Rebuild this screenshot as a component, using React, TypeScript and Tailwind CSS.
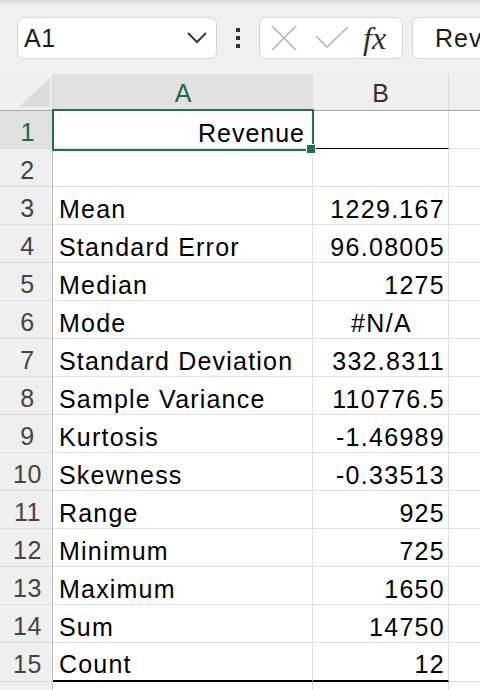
import React from "react";

type Row = { n: number; label?: string; value?: string; center?: boolean };

const rows: Row[] = [
  { n: 2 },
  { n: 3, label: "Mean", value: "1229.167" },
  { n: 4, label: "Standard Error", value: "96.08005" },
  { n: 5, label: "Median", value: "1275" },
  { n: 6, label: "Mode", value: "#N/A", center: true },
  { n: 7, label: "Standard Deviation", value: "332.8311" },
  { n: 8, label: "Sample Variance", value: "110776.5" },
  { n: 9, label: "Kurtosis", value: "-1.46989" },
  { n: 10, label: "Skewness", value: "-0.33513" },
  { n: 11, label: "Range", value: "925" },
  { n: 12, label: "Minimum", value: "725" },
  { n: 13, label: "Maximum", value: "1650" },
  { n: 14, label: "Sum", value: "14750" },
  { n: 15, label: "Count", value: "12" },
];

function Toolbar() {
  return (
    <div className="shrink-0">
      <div className="h-[6px] bg-gradient-to-b from-[#d9d9d9] to-[#f0f0f0]" />
      <div className="flex items-start h-[68px] pt-[11px]">
        {/* Name box */}
        <div className="ml-[17px] w-[200px] h-[42px] shrink-0 rounded-[7px] border border-[#d6d6d6] bg-white flex items-center justify-between pl-[6px] pr-[9px]">
          <span className="text-[25px] leading-none text-[#1b1b1b] tracking-[0.5px]">A1</span>
          <svg width="20" height="12" viewBox="0 0 20 12">
            <polyline points="1,1 10,10 19,1" fill="none" stroke="#3a3a3a" strokeWidth="2" />
          </svg>
        </div>

        {/* more dots */}
        <div className="w-[42px] h-[42px] shrink-0 flex flex-col items-center justify-center gap-[4px]">
          <span className="w-[4px] h-[4px] bg-[#333]" />
          <span className="w-[4px] h-[4px] bg-[#333]" />
          <span className="w-[4px] h-[4px] bg-[#333]" />
        </div>

        {/* cancel / enter / fx */}
        <div className="w-[144px] h-[42px] shrink-0 rounded-[7px] border border-[#d6d6d6] bg-white flex items-center pl-[11px]">
          <svg width="26" height="26" viewBox="0 0 26 26">
            <line x1="1" y1="1" x2="25" y2="25" stroke="#b4b4b4" strokeWidth="1.6" />
            <line x1="25" y1="1" x2="1" y2="25" stroke="#b4b4b4" strokeWidth="1.6" />
          </svg>
          <svg className="ml-[18px]" width="34" height="24" viewBox="0 0 34 24">
            <polyline points="1,10 12,21 33,1" fill="none" stroke="#b4b4b4" strokeWidth="1.6" />
          </svg>
          <span className="ml-[14px] text-[32px] leading-none italic text-[#2e2e2e] font-['Liberation_Serif',serif]">
            fx
          </span>
        </div>

        {/* formula bar */}
        <div className="ml-[9px] w-[120px] h-[42px] shrink-0 overflow-hidden rounded-[7px] border border-[#d6d6d6] bg-white flex items-center pl-[22px]">
          <span className="text-[25px] leading-none text-[#1b1b1b] tracking-[1px] whitespace-nowrap">Revenue</span>
        </div>
      </div>
    </div>
  );
}

function HeaderRow() {
  return (
    <div className="flex h-[37px] shrink-0 border-b border-[#a6a6a6]">
      <div className="w-[53px] shrink-0 bg-[#efefef] border-r border-[#d4d4d4] flex items-end justify-end pr-[2px] pb-[3px]">
        <svg width="31" height="29" viewBox="0 0 31 29">
          <polygon points="0,29 31,29 31,0" fill="#dcdcdc" />
        </svg>
      </div>
      <div className="w-[260px] shrink-0 bg-[#e1e1e1] flex items-center justify-center pt-[3px] text-[25px] text-[#1e6b41]">
        A
      </div>
      <div className="w-[136px] shrink-0 bg-[#efefef] border-r border-[#d9d9d9] flex items-center justify-center pt-[3px] text-[25px] text-[#333]">
        B
      </div>
      <div className="flex-1 bg-[#efefef]" />
    </div>
  );
}

function DataRow({ row }: { row: Row }) {
  const last = row.n === 15;
  return (
    <div className={last ? "flex h-[39px] shrink-0" : "flex h-[38px] shrink-0"}>
      <div className="w-[53px] shrink-0 bg-[#efefef] border-r border-b border-r-[#bdbdbd] border-b-[#dcdcdc] flex justify-center pt-[9px] pl-[3px] text-[25px] leading-[25px] tracking-[0.5px] text-[#444]">
        {row.n}
      </div>
      <div
        className={
          last
            ? "w-[260px] shrink-0 border-r border-r-[#e1e1e1] border-b-2 border-b-black pl-[6px] pt-[9px] text-[25px] leading-[25px] tracking-[1.2px] text-black"
            : "w-[260px] shrink-0 border-r border-b border-[#e1e1e1] pl-[6px] pt-[10px] text-[25px] leading-[25px] tracking-[1.2px] text-black"
        }
      >
        {row.label}
      </div>
      <div
        className={
          (last
            ? "w-[136px] shrink-0 border-r border-r-[#e1e1e1] border-b-2 border-b-black pt-[9px] "
            : "w-[136px] shrink-0 border-r border-b border-[#e1e1e1] pt-[10px] ") +
          (row.center ? "text-center pl-[2px]" : "text-right pr-[3px]") +
          " text-[25px] leading-[25px] tracking-[1.3px] text-black"
        }
      >
        {row.value}
      </div>
      <div className="flex-1 border-b border-[#e1e1e1]" />
    </div>
  );
}

export default function App() {
  return (
    <div className="w-[480px] h-[690px] overflow-hidden bg-[#f0f0f0] flex flex-col font-['Liberation_Sans',Arial,sans-serif]">
      <Toolbar />
      <div className="flex flex-col bg-white">
        <HeaderRow />

        {/* row 1 with the active cell */}
        <div className="flex h-[38px] shrink-0">
          <div className="w-[53px] shrink-0 bg-[#e1e1e1] border-r border-b border-r-[#bdbdbd] border-b-[#dcdcdc] flex justify-center pt-[9px] pl-[3px] text-[25px] leading-[25px] text-[#1e6b41]">
            1
          </div>
          <div className="relative w-[260px] shrink-0 border-r border-b border-[#e1e1e1] text-right pr-[7px] pt-[10px] text-[25px] leading-[25px] tracking-[1px] text-black">
            Revenue
            <div className="absolute -left-[1px] -top-[2px] w-[262px] h-[42px] border-2 border-[#217346]" />
            <div className="absolute left-[253px] top-[33px] w-[10px] h-[10px] bg-[#217346] border border-white" />
          </div>
          <div className="w-[136px] shrink-0 border-r border-r-[#e1e1e1] border-b border-b-black" />
          <div className="flex-1 border-b border-[#e1e1e1]" />
        </div>

        {rows.map((r) => (
          <DataRow key={r.n} row={r} />
        ))}

        {/* row 16 peeking */}
        <div className="flex h-[20px] shrink-0">
          <div className="w-[53px] shrink-0 bg-[#efefef] border-r border-[#bdbdbd]" />
          <div className="w-[260px] shrink-0 border-r border-[#e1e1e1]" />
          <div className="w-[136px] shrink-0 border-r border-[#e1e1e1]" />
          <div className="flex-1" />
        </div>
      </div>
    </div>
  );
}
